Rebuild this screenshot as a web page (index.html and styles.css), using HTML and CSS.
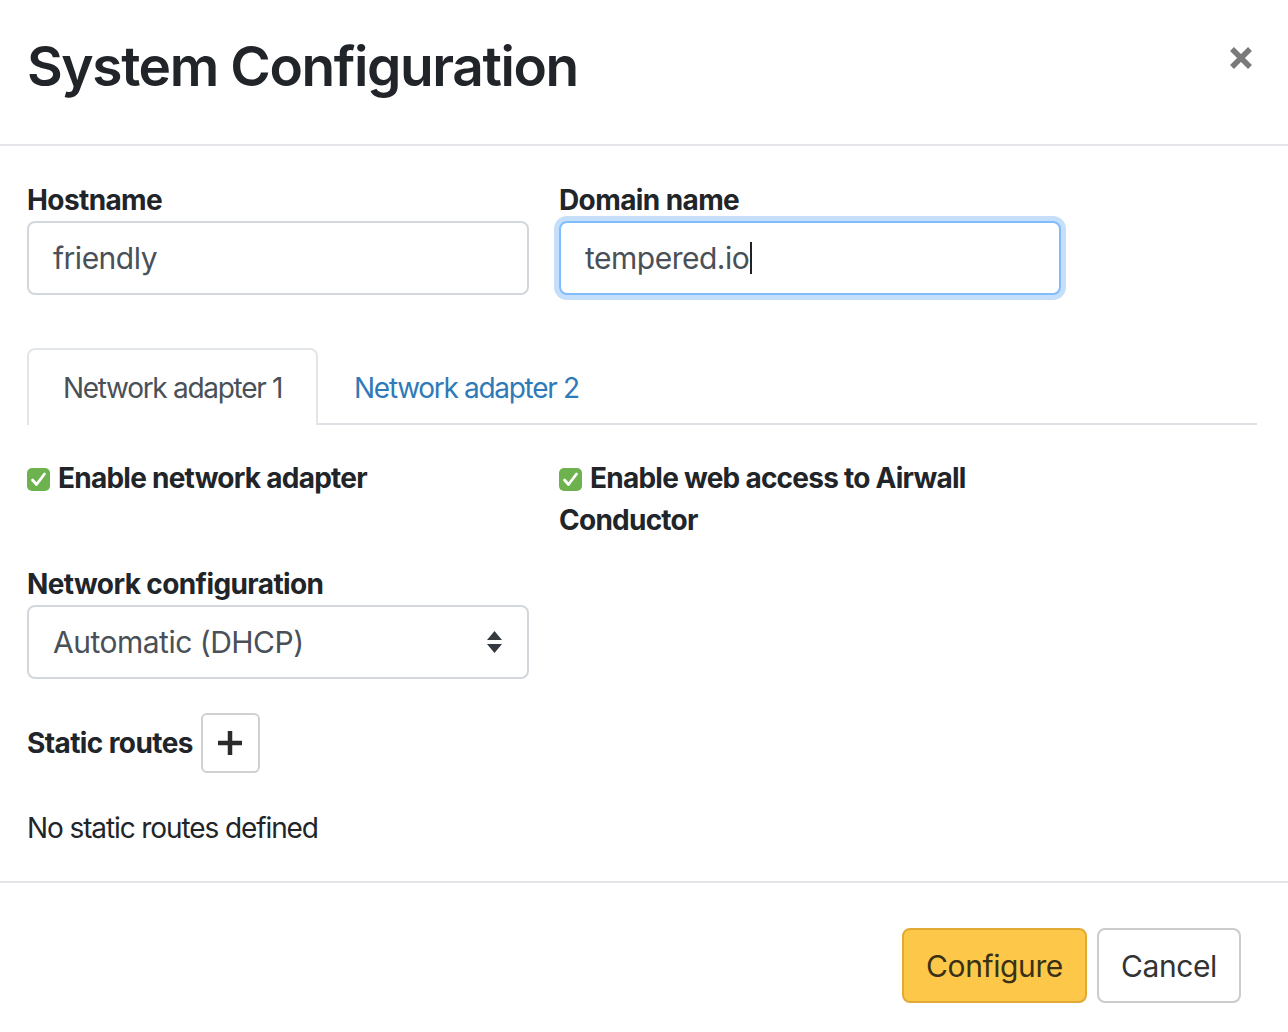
FILE: index.html
```html
<!DOCTYPE html>
<html lang="en">
<head>
<meta charset="utf-8">
<title>System Configuration</title>
<link rel="stylesheet" href="styles.css">
</head>
<body>
<div class="modal">
  <header class="modal-header">
    <h2 class="modal-title">System Configuration</h2>
    <button class="close" aria-label="Close">
      <svg width="26" height="26" viewBox="0 0 26 26"><path d="M4 4 L22 22 M22 4 L4 22" stroke="#7a7a7a" stroke-width="5.5" stroke-linecap="butt"/></svg>
    </button>
  </header>
  <div class="modal-body">
    <div class="row">
      <div class="group">
        <label class="label">Hostname</label>
        <div class="control">friendly</div>
      </div>
      <div class="group">
        <label class="label">Domain name</label>
        <div class="control focused">tempered.io<span class="caret"></span></div>
      </div>
    </div>
    <ul class="tabs">
      <li class="tab active">Network adapter 1</li>
      <li class="tab">Network adapter 2</li>
    </ul>
    <div class="row checks">
      <div class="check"><svg class="box" width="23" height="23" viewBox="0 0 23 23"><rect x="0" y="0" width="23" height="23" rx="5" fill="#6db24f"/><path d="M5.5 12 L9.5 16.5 L17.5 6" fill="none" stroke="#fff" stroke-width="2.8" stroke-linecap="round" stroke-linejoin="round"/></svg>Enable network adapter</div>
      <div class="check"><svg class="box" width="23" height="23" viewBox="0 0 23 23"><rect x="0" y="0" width="23" height="23" rx="5" fill="#6db24f"/><path d="M5.5 12 L9.5 16.5 L17.5 6" fill="none" stroke="#fff" stroke-width="2.8" stroke-linecap="round" stroke-linejoin="round"/></svg>Enable web access to Airwall Conductor</div>
    </div>
    <div class="group netconf">
      <label class="label">Network configuration</label>
      <div class="control select">Automatic (DHCP)
        <svg class="arrows" width="15" height="23" viewBox="0 0 15 23"><path d="M7.5 0 L15 9 L0 9 Z M0 13 L15 13 L7.5 22 Z" fill="#343a40"/></svg>
      </div>
    </div>
    <div class="routes">
      <span class="routes-label">Static routes</span>
      <button class="add" aria-label="Add route">
        <svg width="26" height="26" viewBox="0 0 26 26"><path d="M13 1 V25 M1 13 H25" stroke="#2b2b2b" stroke-width="4.5"/></svg>
      </button>
    </div>
    <p class="empty">No static routes defined</p>
  </div>
  <footer class="modal-footer">
    <button class="btn btn-warning">Configure</button>
    <button class="btn btn-default">Cancel</button>
  </footer>
</div>
</body>
</html>
```

FILE: styles.css
```css
* { box-sizing: border-box; }
html, body { margin: 0; padding: 0; background: #fff; }
body {
  font-family: Inter, "Noto Sans", "Liberation Sans", sans-serif;
  font-size: 28px;
  line-height: 42px;
  color: #212529;
}
.modal { width: 1288px; }
.modal-header {
  display: flex;
  justify-content: space-between;
  align-items: flex-start;
  padding: 33px 34px 44px 27px;
  border-bottom: 2px solid #e3e5e8;
}
.modal-title {
  margin: 0;
  font-size: 55px;
  font-weight: 600;
  line-height: 67px;
  letter-spacing: -1.4px;
  color: #212529;
}
.close {
  background: none;
  border: 0;
  padding: 0;
  margin-top: 12px;
  width: 26px;
  height: 26px;
  display: flex;
}
.modal-body { padding: 33px 31px 32px 27px; }
.row {
  display: grid;
  grid-template-columns: 502px 502px;
  column-gap: 30px;
}
.label {
  display: block;
  font-weight: 700;
  line-height: 42px;
  letter-spacing: -0.6px;
}
.control {
  height: 74px;
  border: 2px solid #d3d7dc;
  border-radius: 8px;
  padding: 0 24px;
  display: flex;
  align-items: center;
  color: #495057;
  background: #fff;
  font-size: 30px;
  letter-spacing: -0.5px;
}
.control.focused {
  border-color: #80bdff;
  box-shadow: 0 0 0 5px #c5dffb;
}
.caret {
  display: inline-block;
  width: 2px;
  height: 32px;
  background: #222;
  margin-left: 1px;
}
.tabs {
  list-style: none;
  margin: 53px 0 0 0;
  padding: 0;
  display: flex;
  border-bottom: 2px solid #dee2e6;
}
.tab {
  height: 77px;
  padding: 0 34px;
  display: flex;
  align-items: center;
  color: #2f7ab8;
  border: 2px solid transparent;
  border-bottom: 0;
  margin-bottom: -2px;
  letter-spacing: -1.3px;
}
.tab.active {
  color: #495057;
  border-color: #e3e6e9;
  border-radius: 8px 8px 0 0;
  background: #fff;
}
.checks { margin-top: 32px; }
.check {
  font-weight: 700;
  line-height: 42px;
  letter-spacing: -0.75px;
}
.box {
  vertical-align: -3px;
  margin-right: 8px;
}
.netconf { margin-top: 22px; width: 502px; }
.select {
  justify-content: space-between;
  padding-right: 25px;
}
.arrows { flex: none; }
.routes {
  margin-top: 34px;
  display: flex;
  align-items: center;
  gap: 8px;
}
.routes-label {
  font-weight: 700;
  letter-spacing: -0.6px;
}
.add {
  width: 59px;
  height: 60px;
  border: 2px solid #d0d0d0;
  border-radius: 6px;
  background: #fff;
  display: flex;
  align-items: center;
  justify-content: center;
  padding: 0;
}
.empty {
  margin: 34px 0 0 0;
  letter-spacing: -1.1px;
}
.modal-footer {
  border-top: 2px solid #e3e5e8;
  padding: 45px 47px 29px 27px;
  display: flex;
  justify-content: flex-end;
  gap: 10px;
}
.btn {
  height: 75px;
  font-family: inherit;
  font-size: 30px;
  border-radius: 8px;
  padding: 0;
  letter-spacing: -0.4px;
}
.btn-warning {
  background: #fdc84a;
  border: 2px solid #e2aa35;
  color: #3a3015;
  width: 185px;
}
.btn-default {
  background: #fff;
  border: 2px solid #cccccc;
  color: #333;
  width: 144px;
}
```
